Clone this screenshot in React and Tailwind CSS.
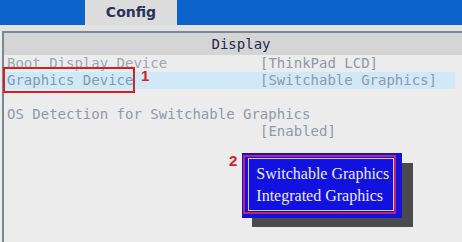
import React from "react";

const mono = { fontFamily: '"DejaVu Sans Mono", "Liberation Mono", monospace' };
const sans = { fontFamily: '"Liberation Sans", "DejaVu Sans", sans-serif' };

const Row = ({ label, value, active, labelClass = "text-[#8e9aab]" }) => (
  <div className={`flex h-[17px] items-center ${active ? "bg-[#cfe9f9] mr-[7px]" : ""}`}>
    <span className={`w-[256px] pl-[3px] whitespace-pre ${labelClass}`}>{label}</span>
    <span className="whitespace-pre text-[#8e9aab]">{value}</span>
  </div>
);

// popup menu with its shadow and the red callout frame
const Popup = () => (
  <div className="absolute left-[229px] top-[152px] flex items-start gap-[5px]">
    <span className="text-[15px] font-bold leading-[17px] text-[#d42128]" style={sans}>
      2
    </span>
    <div className="relative mt-[1px]">
      <div className="absolute left-[10px] top-[10px] w-[161px] h-[64px] bg-[#4a4a4a]" />
      <div className="relative w-[160px] h-[65px] bg-[#1212e0] pl-[6px] pt-[5px]">
        <div
          className="flex w-[146px] h-[53px] flex-col justify-center border border-[#c9c9f2] pl-[7px] text-[16px] leading-[22px] text-[#ececf8]"
          style={{ fontFamily: '"Liberation Serif", "DejaVu Serif", serif' }}
        >
          <span>Switchable Graphics</span>
          <span>Integrated Graphics</span>
        </div>
        <div className="absolute left-[1px] top-[2px] w-[153px] h-[59px] border-2 border-[#c3226c]" />
      </div>
    </div>
  </div>
);

export default function App() {
  return (
    <div className="relative w-[462px] h-[242px] overflow-hidden bg-[#ececec]" style={mono}>
      <div className="flex h-[25px] bg-[#0b63ca]">
        <div className="w-[85px]" />
        <div
          className="w-[92px] flex items-center justify-center bg-[#dcdcdc] text-[14px] font-bold text-[#27325a]"
          style={{ fontFamily: '"DejaVu Sans", "Liberation Sans", sans-serif' }}
        >
          Config
        </div>
      </div>
      <div className="h-[6px] bg-[#e2e2e2]" />
      <div className="ml-[2px] h-[211px] border-l-2 border-t-2 border-[#7c8795] text-[14px]">
        <div className="flex h-[22px] items-center justify-center pl-[16px] bg-[#d5d5d5] text-[#1f2b48]">
          Display
        </div>
        <Row label="Boot Display Device" value="[ThinkPad LCD]" labelClass="text-[#9da6b3]" />
        <Row label="Graphics Device" value="[Switchable Graphics]" active labelClass="text-[#7f9bb4]" />
        <div className="h-[17px]" />
        <Row label="OS Detection for Switchable Graphics" value="" />
        <Row label="" value="[Enabled]" />
      </div>

      <div className="absolute left-[3px] top-[67px] flex items-start gap-[6px]">
        <div className="w-[132px] h-[26px] border-2 border-[#d42128]" />
        <span className="-mt-[2px] text-[15px] font-bold text-[#d42128]" style={sans}>
          1
        </span>
      </div>

      <Popup />
    </div>
  );
}
